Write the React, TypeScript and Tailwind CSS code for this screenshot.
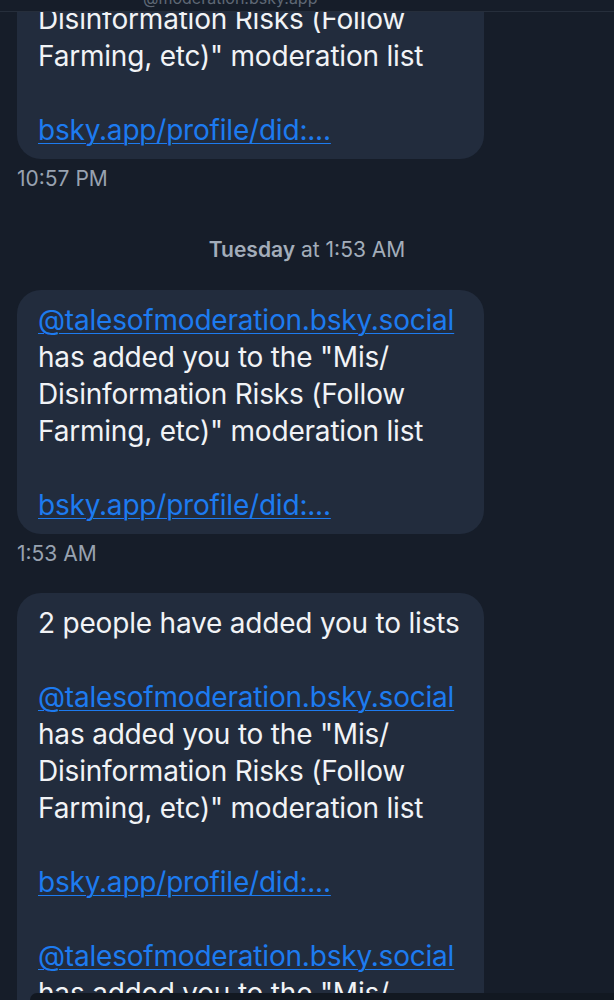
const font = { fontFamily: "Inter, 'Noto Sans', sans-serif" };

function Line({ children }: { children?: React.ReactNode }) {
  return <div className="h-[37px] leading-[37px] whitespace-nowrap">{children ?? "\u00a0"}</div>;
}

function Handle() {
  return <span className="text-[#1d7bf0] underline decoration-1 underline-offset-[3px]">@talesofmoderation.bsky.social</span>;
}

function Link() {
  return <span className="text-[#1d7bf0] underline decoration-1 underline-offset-[3px]">bsky.app/profile/did:...</span>;
}

function ListEntry() {
  return (
    <>
      <Line>
        <Handle />
      </Line>
      <Line>has added you to the "Mis/</Line>
      <Line>Disinformation Risks (Follow</Line>
      <Line>Farming, etc)" moderation list</Line>
      <Line />
      <Line>
        <Link />
      </Line>
    </>
  );
}

function Bubble({ children, className = "" }: { children: React.ReactNode; className?: string }) {
  return (
    <div className={`w-[467px] rounded-[24px] bg-[#222c3d] pl-[21px] pt-[12px] pb-[10px] text-[28px] tracking-[-0.2px] text-[#f1f3f6] ${className}`}>
      {children}
    </div>
  );
}

function Time({ children }: { children: React.ReactNode }) {
  return <div className="mt-[8px] h-[24px] text-[21px] leading-[24px] text-[#98a2b0]">{children}</div>;
}

export default function App() {
  return (
    <div className="relative h-[1000px] w-full overflow-hidden bg-[#161d29]" style={font}>
      {/* header bar, scrolled content slides under it */}
      <div className="absolute inset-x-0 top-0 z-10 h-[12px] overflow-hidden border-b border-[#262e3b] bg-[#161d29]">
        <div className="-mt-[12px] pl-[143px] text-[16px] leading-[20px] text-[#5f6875]">@moderation.bsky.app</div>
      </div>

      <div className="flex flex-col px-[17px] -mt-[85px]">
        <Bubble>
          <ListEntry />
        </Bubble>
        <Time>10:57 PM</Time>

        <div className="mt-[47px] h-[24px] text-center text-[21px] leading-[24px] text-[#a3adba]">
          <span className="font-semibold">Tuesday</span> at 1:53 AM
        </div>

        <Bubble className="mt-[28px]">
          <ListEntry />
        </Bubble>
        <Time>1:53 AM</Time>

        <Bubble className="mt-[27px]">
          <Line>2 people have added you to lists</Line>
          <Line />
          <ListEntry />
          <Line />
          <Line>
            <Handle />
          </Line>
          <Line>has added you to the "Mis/</Line>
          <Line>Disinformation Risks (Follow</Line>
        </Bubble>
      </div>

      {/* composer edge peeking in at the bottom */}
      <div className="absolute bottom-0 left-[30px] right-0 h-[7px] rounded-tl-[16px] bg-[#121821]" />
    </div>
  );
}
